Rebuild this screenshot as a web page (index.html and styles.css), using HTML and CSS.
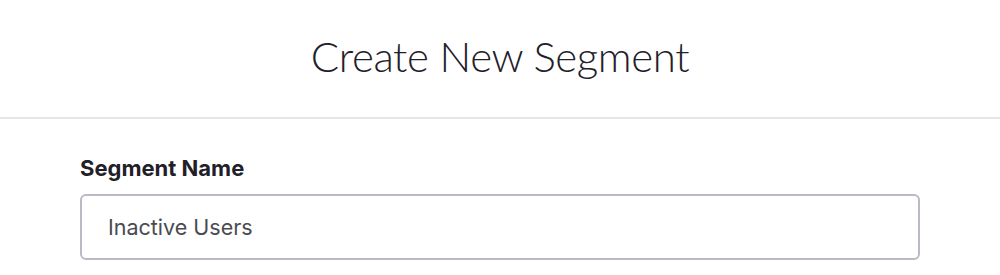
FILE: index.html
```html
<!DOCTYPE html>
<html lang="en">
<head>
    <meta charset="UTF-8">
    <title>Create New Segment</title>
    <link rel="stylesheet" href="styles.css">
</head>
<body>
    <div class="modal">
        <div class="modal-header">
            <h1 class="modal-title">Create New Segment</h1>
        </div>
        <div class="modal-body">
            <label class="field-label" for="segmentName">Segment Name</label>
            <input class="field-input" id="segmentName" type="text" value="Inactive Users">
        </div>
    </div>
</body>
</html>
```

FILE: styles.css
```css
* {
    margin: 0;
    padding: 0;
    box-sizing: border-box;
}

body {
    font-family: Inter, "Noto Sans", sans-serif;
    background: #fff;
    color: #1f2029;
}

.modal {
    width: 1000px;
}

.modal-header {
    height: 119px;
    padding-top: 35px;
    text-align: center;
    border-bottom: 2px solid #e5e5e7;
}

.modal-title {
    font-family: Lato, sans-serif;
    font-size: 42px;
    line-height: 42px;
    font-weight: 300;
    letter-spacing: -0.4px;
    color: #1f2029;
}

.modal-body {
    padding: 38px 80px 0;
    display: flex;
    flex-direction: column;
}

.field-label {
    font-size: 22px;
    line-height: 22px;
    font-weight: 700;
    color: #1f2029;
    margin-bottom: 15px;
}

.field-input {
    width: 840px;
    height: 66px;
    border: 2px solid #b8bac5;
    border-radius: 6px;
    padding: 0 24px 0 26px;
    font-family: inherit;
    font-size: 21.5px;
    color: #4a4b50;
    background: #fff;
    outline: none;
}
```
